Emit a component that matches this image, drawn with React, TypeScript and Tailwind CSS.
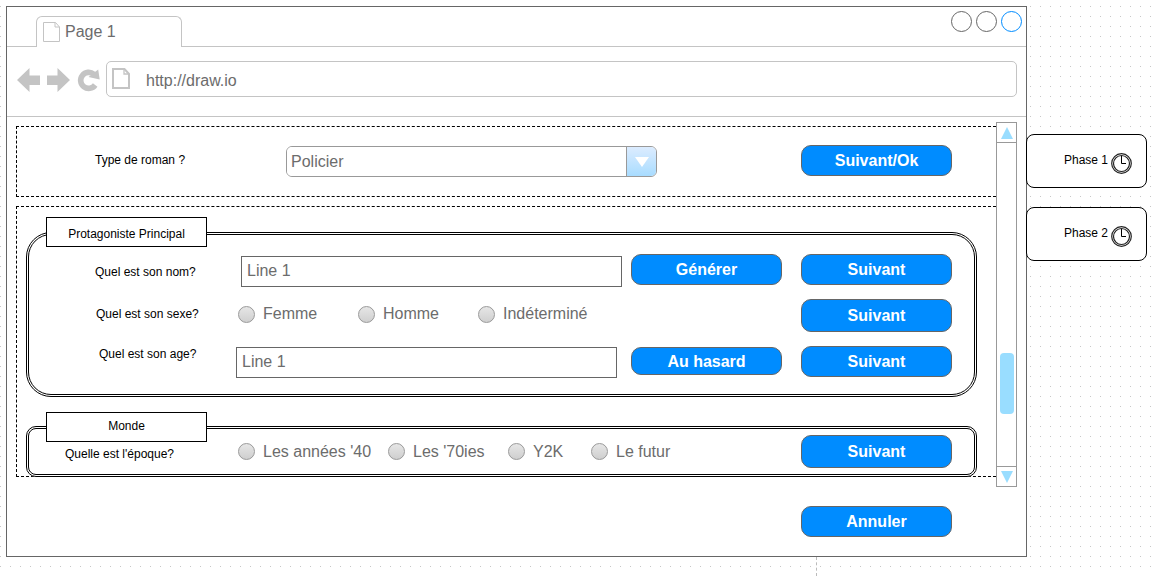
import React from "react";

function ActionButton({
  children,
  className = "h-[31px]",
}: {
  children: React.ReactNode;
  className?: string;
}) {
  return (
    <button
      type="button"
      className={`w-[151px] shrink-0 rounded-[10px] border border-[#666] bg-[#008cff] pt-px text-base leading-5 font-bold text-white ${className}`}
    >
      {children}
    </button>
  );
}

function Radio({
  name,
  label,
  className = "",
}: {
  name: string;
  label: string;
  className?: string;
}) {
  return (
    <label
      className={`flex shrink-0 items-center gap-2 text-base leading-5 whitespace-nowrap text-[#6c6c6c] ${className}`}
    >
      <input
        type="radio"
        name={name}
        className="size-[17px] shrink-0 appearance-none rounded-full border border-[#999] bg-linear-to-b from-[#e6e6e6] to-[#cfcfcf] checked:border-4"
      />
      {label}
    </label>
  );
}

function Group({
  title,
  legendClass,
  className,
  children,
}: {
  title: string;
  legendClass: string;
  className: string;
  children: React.ReactNode;
}) {
  return (
    <fieldset
      className={`relative min-w-0 border-[3px] border-double border-black bg-white pr-[22px] ${className}`}
    >
      <legend
        className={`absolute left-[17px] flex h-[30px] w-[161px] justify-center border border-black bg-white text-xs ${legendClass}`}
      >
        {title}
      </legend>
      {children}
    </fieldset>
  );
}

function PhaseCard({ children }: { children: React.ReactNode }) {
  return (
    <div className="flex h-[54px] w-[121px] items-start justify-end gap-[3px] rounded-lg border border-black bg-white pt-[18px] pr-[14px] text-xs leading-[14px]">
      <span>{children}</span>
      <svg width="21" height="21" viewBox="0 0 21 21" fill="none" stroke="#222" aria-hidden="true">
        <circle cx="10.5" cy="10.5" r="9.8" strokeWidth="1.2" />
        <circle cx="10.5" cy="10.5" r="8" strokeWidth="1.2" />
        <path d="M10.500 3v7.500h4.500" stroke="#000" />
      </svg>
    </div>
  );
}

const fieldClass =
  "h-[31px] min-w-0 flex-1 border border-[#666] bg-white px-[5px] pb-0.5 text-base text-[#6c6c6c] outline-none";

export default function App() {
  return (
    <div className="min-h-screen bg-white bg-[linear-gradient(90deg,transparent_1px,white_1px),linear-gradient(#c8c8c8_1px,white_1px)] bg-[length:10px_10px] bg-[position:0_6px] pt-1.5 font-['Liberation_Sans',Arial,sans-serif] text-black">
      <div className="flex items-start pr-[13px] pl-1.5">
        <main className="min-w-0 flex-1 border border-[#666] bg-white">
          <header className="flex h-10 justify-between border-b border-[#c4c4c4] pr-1 pl-[29px]">
            <div className="-mb-px flex h-[31px] w-[146px] items-center gap-[5px] self-end rounded-t-md border border-b-0 border-[#c4c4c4] bg-white pl-1.5 text-base leading-5 text-[#6c6c6c]">
              <svg width="17" height="20" viewBox="0 0 17 20" fill="none" stroke="#c4c4c4" aria-hidden="true">
                <path d="M.5.5h12l4 4.500v14.500H.5z" />
                <path d="M12 .5v4.500h4.500" />
              </svg>
              Page 1
            </div>
            <div className="flex gap-1 pt-1">
              <button type="button" aria-label="Réduire" className="size-[21px] rounded-full border border-[#666]" />
              <button type="button" aria-label="Agrandir" className="size-[21px] rounded-full border border-[#666]" />
              <button type="button" aria-label="Fermer" className="size-[21px] rounded-full border border-[#008cff]" />
            </div>
          </header>

          <nav className="flex h-[70px] items-center border-b border-[#c4c4c4] pr-[9px] pb-1.5 pl-2.5">
            <button type="button" aria-label="Précédent" className="mr-[7px] pt-0.5">
              <svg width="23" height="24" viewBox="0 0 23 24" fill="#c4c4c4">
                <path d="M0 12 12.500 0v7.500H23v9.500H12.500v7z" />
              </svg>
            </button>
            <button type="button" aria-label="Suivant" className="mr-[7px] pt-0.5">
              <svg width="23" height="24" viewBox="0 0 23 24" fill="#c4c4c4">
                <path d="M23 12 10.500 0v7.500H0v9.500h10.500v7z" />
              </svg>
            </button>
            <button type="button" aria-label="Actualiser" className="mr-1.5 pt-0.5">
              <svg width="23" height="24" viewBox="0 0 23 24" fill="none">
                <path d="M16.800 6.200A8 8 0 1 0 18.200 17" stroke="#c4c4c4" strokeWidth="5.600" />
                <path d="M21.200 1.500 22.700 11.500 11.500 9z" fill="#c4c4c4" />
              </svg>
            </button>
            <div className="flex h-9 min-w-0 flex-1 items-center gap-[15px] rounded-[5px] border border-[#c4c4c4] pl-[5px]">
              <svg width="19" height="21" viewBox="0 0 19 21" fill="none" stroke="#c4c4c4" strokeWidth="2" aria-hidden="true">
                <path d="M1 1h11.500L17 6V20H1z" />
                <path d="M12 1v5h5" strokeWidth="1.300" />
              </svg>
              <input
                aria-label="Adresse"
                defaultValue="http://draw.io"
                className="min-w-0 flex-1 pt-1 text-base leading-5 text-[#6c6c6c] outline-none"
              />
            </div>
          </nav>

          <div className="flex px-[9px]">
            <div className="flex min-w-0 flex-1 flex-col gap-[9px] pt-[9px] pb-[11px]">
              <section className="flex h-[71px] items-start border border-r-0 border-dashed border-black pt-[18px] pr-11">
                <label htmlFor="genre" className="w-[269px] shrink-0 pl-[78px] text-xs leading-[30px]">
                  Type de roman ?
                </label>
                <div className="mt-px mr-36 flex h-[31px] min-w-0 flex-1 overflow-hidden rounded-md border border-[#999]">
                  <select
                    id="genre"
                    className="min-w-0 flex-1 appearance-none bg-white pl-1 text-base text-[#6c6c6c] outline-none"
                  >
                    <option>Policier</option>
                  </select>
                  <span className="pointer-events-none flex w-[30px] items-center justify-center border-l border-[#999] bg-linear-to-b from-[#dcecff] to-[#a8dcff]">
                    <svg width="14" height="10" viewBox="0 0 14 10" fill="white" aria-hidden="true">
                      <path d="M0 0h14L7 10z" />
                    </svg>
                  </span>
                </div>
                <ActionButton>Suivant/Ok</ActionButton>
              </section>

              <section className="-mb-px border border-r-0 border-dashed border-black pt-[25px] pr-[19px] pl-[9px]">
                <div className="-mb-px flex flex-col gap-[29px]">
                  <Group
                    title="Protagoniste Principal"
                    legendClass="-top-[18px] leading-[32px]"
                    className="rounded-[25px] pt-[19px] pb-4"
                  >
                    <div className="flex h-[33px] items-start">
                      <label htmlFor="nom" className="w-[212px] shrink-0 pl-[66px] text-xs leading-9">
                        Quel est son nom?
                      </label>
                      <input id="nom" defaultValue="Line 1" className={`mt-0.5 mr-[9px] ${fieldClass}`} />
                      <ActionButton className="mr-[19px] h-[31px]">Générer</ActionButton>
                      <ActionButton>Suivant</ActionButton>
                    </div>
                    <div className="mt-3 flex h-[33px] items-start" role="radiogroup" aria-labelledby="sexe">
                      <span id="sexe" className="w-[209px] shrink-0 pl-[67px] text-xs leading-[30px]">
                        Quel est son sexe?
                      </span>
                      <div className="flex min-w-0 flex-1 pt-[5px]">
                        <Radio name="sexe" label="Femme" className="w-[120px]" />
                        <Radio name="sexe" label="Homme" className="w-[120px]" />
                        <Radio name="sexe" label="Indéterminé" />
                      </div>
                      <ActionButton className="h-[33px]">Suivant</ActionButton>
                    </div>
                    <div className="mt-3.5 flex items-start">
                      <label htmlFor="age" className="w-[207px] shrink-0 pl-[70px] text-xs leading-4">
                        Quel est son age?
                      </label>
                      <input id="age" defaultValue="Line 1" className={`mt-px mr-3.5 ${fieldClass}`} />
                      <ActionButton className="mt-px mr-[19px] h-7">Au hasard</ActionButton>
                      <ActionButton>Suivant</ActionButton>
                    </div>
                  </Group>

                  <Group title="Monde" legendClass="-top-[17px] leading-[26px]" className="rounded-[10px] py-1.5">
                    <div className="flex items-center" role="radiogroup" aria-labelledby="epoque">
                      <span id="epoque" className="w-[209px] shrink-0 pt-1 pl-9 text-xs leading-4">
                        Quelle est l'époque?
                      </span>
                      <div className="flex min-w-0 flex-1">
                        <Radio name="epoque" label="Les années '40" className="w-[150px]" />
                        <Radio name="epoque" label="Les '70ies" className="w-[120px]" />
                        <Radio name="epoque" label="Y2K" className="w-[83px]" />
                        <Radio name="epoque" label="Le futur" />
                      </div>
                      <ActionButton className="h-[33px]">Suivant</ActionButton>
                    </div>
                  </Group>
                </div>
              </section>
            </div>

            <div className="mt-[5px] flex w-[21px] shrink-0 flex-col border border-[#999] bg-white">
              <button
                type="button"
                aria-label="Défiler vers le haut"
                className="flex h-5 items-center justify-center border-b border-[#999]"
              >
                <svg width="12" height="12" viewBox="0 0 12 12" fill="#99ddff">
                  <path d="M6 0l6 12H0z" />
                </svg>
              </button>
              <div className="flex flex-1 flex-col items-center pt-[210px]">
                <div className="h-[61px] w-3.5 rounded bg-[#99ddff]" />
              </div>
              <button
                type="button"
                aria-label="Défiler vers le bas"
                className="flex h-5 items-center justify-center border-t border-[#999]"
              >
                <svg width="12" height="12" viewBox="0 0 12 12" fill="#99ddff">
                  <path d="M0 0h12L6 12z" />
                </svg>
              </button>
            </div>
          </div>

          <footer className="flex justify-end pt-[19px] pr-[74px] pb-[19px]">
            <ActionButton>Annuler</ActionButton>
          </footer>
        </main>

        <aside className="-ml-px flex shrink-0 flex-col gap-[19px] pt-32">
          <PhaseCard>Phase 1</PhaseCard>
          <PhaseCard>Phase 2</PhaseCard>
        </aside>
      </div>
      <div className="ml-[816px] h-[19px] border-l border-dashed border-[#bbb]" />
    </div>
  );
}
